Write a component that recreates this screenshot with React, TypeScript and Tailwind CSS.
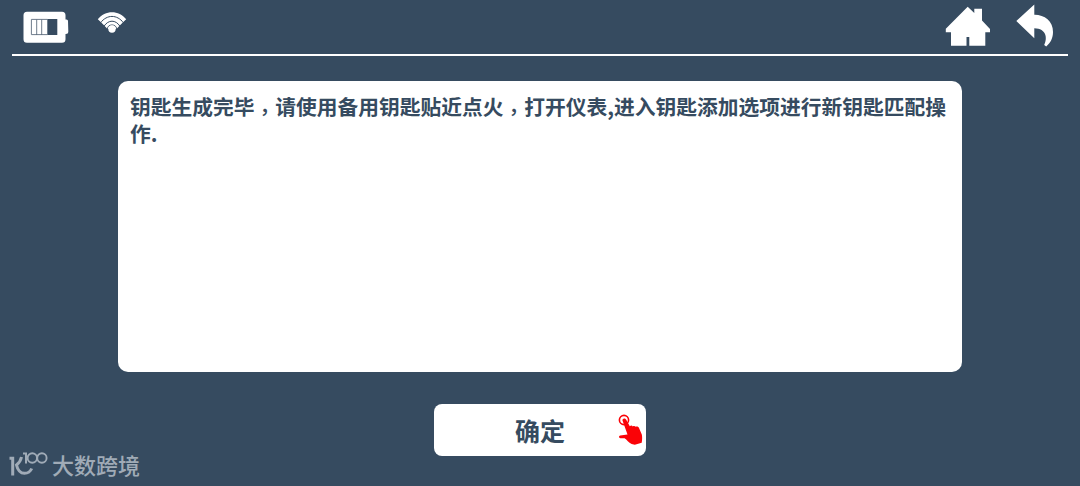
import type { ReactNode } from "react";

const content = {
  before: "钥匙生成完毕",
  middle: "请使用备用钥匙贴近点火",
  after: "打开仪表,进入钥匙添加选项进行新钥匙匹配操作.",
  comma: "\uff0c",
  confirm: "确定",
  watermark: "大数跨境",
};

function BatteryIcon() {
  return (
    <svg width="46" height="32" viewBox="0 0 46 32">
      <path
        fill="#fff"
        d="M4 .7h35a3.500 3.500 0 0 1 3.500 3.500v4.300h1a1.500 1.500 0 0 1 1.500 1.500l.3 10.500a2.500 2.500 0 0 1-2.500 2.500h-.3v5.300a3.500 3.500 0 0 1-3.500 3.500H4a3.500 3.500 0 0 1-3.500-3.500V4.200A3.500 3.500 0 0 1 4 .7z"
      />
      <rect x="24.3" y="8" width="10" height="16" fill="#364b60" />
      <path
        fill="none"
        stroke="#5d6d7e"
        strokeWidth="0.9"
        d="M24.500 8.400H8.400v15.200h16.100M13.700 8.500v15.500M18.700 8.500v15.500"
      />
    </svg>
  );
}

function WifiIcon() {
  return (
    <svg width="30" height="24" viewBox="0 0 30 24">
      <path
        fill="#fff"
        d="M.8 8.300C8-1.200 22-1.200 29.200 8.300L26 11.200 23 14.300 19.500 18h-9L7 14.300 4 11.200z"
      />
      <path
        fill="none"
        stroke="#364b60"
        strokeWidth="1"
        d="M3.500 11.800C10 3.300 20 3.300 26.500 11.800M7 15.300C11.200 8.500 18.800 8.500 23 15.300M10.600 19C9.200 12.300 20.800 12.300 19.400 19"
      />
      <circle cx="15" cy="18" r="3.700" fill="#fff" />
    </svg>
  );
}

function HomeIcon() {
  return (
    <svg width="46" height="41" viewBox="0 0 46 41">
      <path
        fill="#fff"
        d="M22.700.8l6.600 6.200V2.800h7.700v11.700l8 8.500v3.200h-4.700v13.500H24.300v-8.700h-2.800v8.700H6V26.200H.8v-3.500z"
      />
    </svg>
  );
}

function BackIcon() {
  return (
    <svg width="38" height="43" viewBox="0 0 38 43">
      <path
        fill="#fff"
        d="M18.300.5v10.200C28 10.500 37.300 17 37 28c0 6-2.500 11-6.800 14.500l-2-1.500c3.300-6.500 2.500-16.500-9.900-16.700v9.900L.3 17z"
      />
    </svg>
  );
}

function TapIcon() {
  return (
    <svg width="25" height="31" viewBox="0 0 25 31">
      <circle cx="6" cy="6" r="4.600" fill="none" stroke="#fa0207" strokeWidth="1.600" />
      <path
        fill="#fa0207"
        d="M4.500 6.400c-.3-2 2.700-2.800 3.600-.8l3.700 6.600c1.200-1 2.200-.8 3 .2 1-.9 2.200-.5 2.900.4 1.200-.7 2.800-.3 3.300 1.200l2.800 6.600c.5 2.200.5 5.400-.1 8.100l-6.900 2.100-3.200-.7c-2.900-1.400-4.800-4.600-7-5.900H2.400c-1.700 0-1.900-2.300-.2-2.600l7.300-1z"
      />
    </svg>
  );
}

function WatermarkLogo() {
  return (
    <svg width="39" height="26" viewBox="0 0 39 26" fill="none" stroke="#a0abb7">
      <path strokeWidth="3" d="M.5 7.200h3.200v17.300" />
      <path strokeWidth="3" d="M12.500 6C11.500 10.500 9.500 12.500 7.500 14c1 4.500 3.500 8.300 8 8.300 3.500 0 6-2 7.200-4.800" />
      <path strokeWidth="2" d="M14 2.500h3v10" />
      <circle cx="23.300" cy="7" r="4.700" strokeWidth="1.900" />
      <circle cx="32.900" cy="7" r="4.700" strokeWidth="1.900" />
    </svg>
  );
}

// the TC face centres its comma in the cell
function Comma() {
  return (
    <span className="inline-block align-[-5px] font-['Noto_Sans_CJK_TC',sans-serif] leading-[14px] font-medium">
      {content.comma}
    </span>
  );
}

function Panel({ children }: { children: ReactNode }) {
  return (
    <div className="mx-auto mt-[25px] h-[291px] w-[844px] shrink-0 rounded-[10px] bg-white px-3 pt-3 text-[20.75px] leading-[27px] font-bold">
      {children}
    </div>
  );
}

export default function App() {
  return (
    <div className="flex h-[486px] w-[1080px] flex-col overflow-hidden bg-[#364b60] font-['Noto_Sans_CJK_SC',sans-serif] text-[#364b60]">
      <header className="mx-3 flex h-14 shrink-0 items-start border-b-2 border-white pr-[14px] pl-[11px]">
        <div className="pt-[11px]">
          <BatteryIcon />
        </div>
        <div className="ml-7 pt-[11px]">
          <WifiIcon />
        </div>
        <div className="ml-auto pt-[6px]">
          <HomeIcon />
        </div>
        <div className="ml-[25px] pt-1">
          <BackIcon />
        </div>
      </header>

      <Panel>
        {content.before}
        <Comma />
        {content.middle}
        <Comma />
        {content.after}
      </Panel>

      <button
        type="button"
        className="mx-auto mt-8 grid h-[52px] w-[212px] shrink-0 grid-cols-[1fr_auto_1fr] items-center rounded-lg bg-white text-[25px] leading-9 font-bold"
      >
        <span className="col-start-2">{content.confirm}</span>
        <span className="justify-self-end pr-[3px] pb-px">
          <TapIcon />
        </span>
      </button>

      <footer className="-mt-2 flex items-center pl-[9px] text-[#a0abb7]">
        <WatermarkLogo />
        <span className="ml-1 text-[22px] leading-[32px] font-medium">
          {content.watermark}
        </span>
      </footer>
    </div>
  );
}
